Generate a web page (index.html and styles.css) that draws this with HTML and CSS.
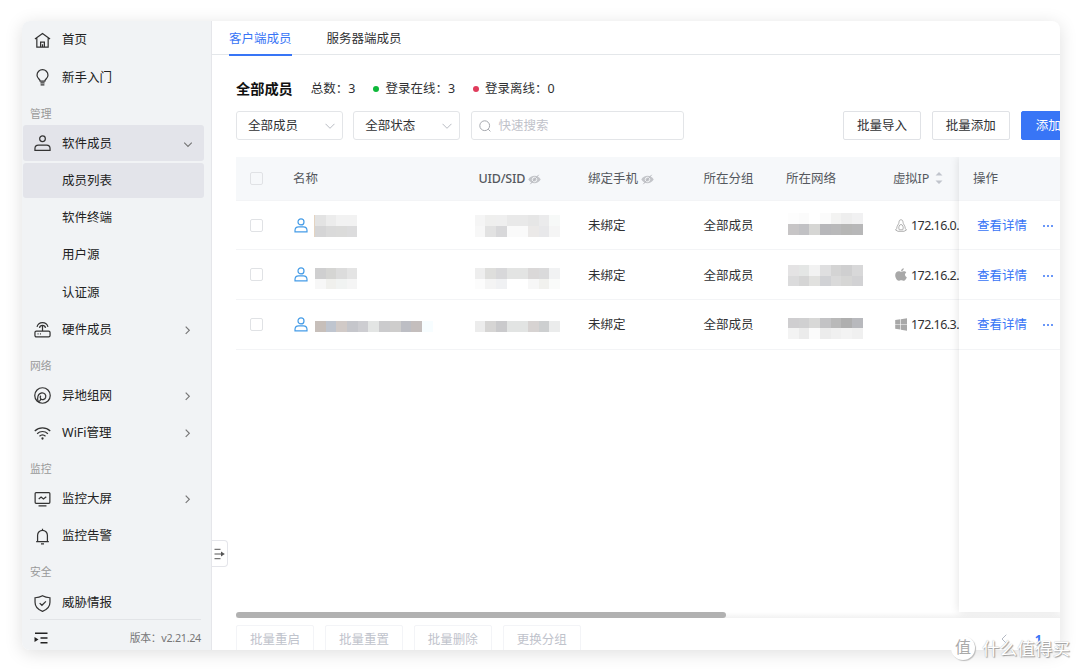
FILE: index.html
```html
<!DOCTYPE html>
<html lang="zh-CN">

<head>
    <meta charset="UTF-8" />
    <meta name="viewport" content="width=device-width, initial-scale=1.0" />
    <title>全部成员</title>
    <link rel="stylesheet" href="styles.css">
</head>

<body>
    <div class="window">
        <!-- 左侧菜单 -->
        <aside class="sidebar">
            <ul class="menu">
                <li class="item">
                    <svg class="icon" viewBox="0 0 18 18"><path d="M1 7.500 9 1.500l8 6M3 6.500v9.500h12V6.500M7 15.700v-5h4v5M9 13v2.500" /></svg>
                    <span>首页</span>
                </li>
                <li class="item">
                    <svg class="icon" viewBox="0 0 18 18"><path d="M6.500 12.800c0-1.800-3.300-3-3.300-6.300a5.800 5.800 0 0 1 11.600 0c0 3.300-3.300 4.500-3.300 6.300zM6.800 14.800h4.400M7 16.700h4" /></svg>
                    <span>新手入门</span>
                </li>
                <li class="group">管理</li>
                <li class="item active">
                    <svg class="icon" viewBox="0 0 18 18"><circle cx="9" cy="4" r="3" /><path d="M1 16.300v-1.800a3.700 3.700 0 0 1 3.700-3.700h8.600a3.700 3.700 0 0 1 3.700 3.700v1.800z" /></svg>
                    <span>软件成员</span>
                    <svg class="arrow" viewBox="0 0 10 10"><path d="m1.200 3.700 3.800 3.800 3.800-3.800" /></svg>
                </li>
                <li class="item sub active">成员列表</li>
                <li class="item sub">软件终端</li>
                <li class="item sub">用户源</li>
                <li class="item sub">认证源</li>
                <li class="item">
                    <svg class="icon" viewBox="0 0 18 18"><rect x="1" y="10.700" width="16" height="6.100" rx="1.500" /><path d="M9 10.500V5.300M3.200 6.200a6 6 0 0 1 11.600 0M5.800 7.200a3.300 3.300 0 0 1 6.400 0M3.800 13.700h1M6.300 13.700h1" /></svg>
                    <span>硬件成员</span>
                    <svg class="arrow" viewBox="0 0 10 10"><path d="m2.700 1.700 3.600 3.600-3.600 3.600" /></svg>
                </li>
                <li class="group">网络</li>
                <li class="item">
                    <svg class="icon" viewBox="0 0 18 18"><circle cx="9" cy="9" r="8.200" /><path d="M4.500 15.800C3 11.500 4 6.800 8.200 6.200c3-.3 4.900 2.400 4.100 4.900-.7 2-3 2.800-4.600 1.800-1.300-.9-1.500-2.800-.4-3.700M4.500 15.800c1.200-.3 2.300-1.300 2.700-2.900" /></svg>
                    <span>异地组网</span>
                    <svg class="arrow" viewBox="0 0 10 10"><path d="m2.700 1.700 3.600 3.600-3.600 3.600" /></svg>
                </li>
                <li class="item">
                    <svg class="icon" viewBox="0 0 18 18"><path d="M.8 6.400c4.700-4.400 11.700-4.400 16.400 0M3.300 9.200c3.300-3.100 8.100-3.100 11.400 0M5.800 11.900c2-1.800 4.400-1.800 6.400 0" /><circle class="solid" cx="9" cy="14.300" r="1.200" /></svg>
                    <span>WiFi管理</span>
                    <svg class="arrow" viewBox="0 0 10 10"><path d="m2.700 1.700 3.600 3.600-3.600 3.600" /></svg>
                </li>
                <li class="group">监控</li>
                <li class="item">
                    <svg class="icon" viewBox="0 0 18 18"><rect x="1.200" y="1.700" width="15.600" height="11.300" rx="1" /><path d="m5 8.500 2.500-2 2.500 2 3-2.500M4.800 15.800h8.400" /></svg>
                    <span>监控大屏</span>
                    <svg class="arrow" viewBox="0 0 10 10"><path d="m2.700 1.700 3.600 3.600-3.600 3.600" /></svg>
                </li>
                <li class="item">
                    <svg class="icon" viewBox="0 0 18 18"><path d="M2.300 14.500h13.400M3.800 14.300V7.700a5.200 5.200 0 0 1 10.400 0v6.600M9 .8v1.700M7.400 16.800h3.200" /></svg>
                    <span>监控告警</span>
                </li>
                <li class="group">安全</li>
                <li class="item">
                    <svg class="icon" viewBox="0 0 18 18"><path d="M9 .8c2.400 1.400 5 2 7.900 2.100v4.900c0 4.600-2.700 7.700-7.900 9.500-5.200-1.800-7.900-4.900-7.900-9.500V2.900C4 2.800 6.600 2.200 9 .8zM6 8.600l2.400 2.300 4.200-4.200" /></svg>
                    <span>威胁情报</span>
                </li>
            </ul>
            <div class="sidebar-footer">
                <svg class="fold" viewBox="0 0 14 12"><path d="M1 1.200h12.500M6.500 6h7M6.500 10.800h7" /><path class="solid" d="M.5 5v5l4-2.500z" /></svg>
                <span>版本：v2.21.24</span>
            </div>
        </aside>

        <!-- 右侧内容 -->
        <main class="main">
            <nav class="tabs">
                <a class="tab active">客户端成员</a>
                <a class="tab">服务器端成员</a>
            </nav>
            <section class="content">
                <div class="summary">
                    <h1>全部成员</h1>
                    <span class="total">总数：3</span>
                    <span class="state online">登录在线：3</span>
                    <span class="state offline">登录离线：0</span>
                </div>
                <div class="toolbar">
                    <div class="select">全部成员<svg viewBox="0 0 10 10"><path d="m.5 2.800 4.500 4.500 4.500-4.500" /></svg></div>
                    <div class="select">全部状态<svg viewBox="0 0 10 10"><path d="m.5 2.800 4.500 4.500 4.500-4.500" /></svg></div>
                    <div class="search"><svg viewBox="0 0 12 12"><circle cx="5.700" cy="5.700" r="4.900" /><path d="m9.200 9.200 2.200 2.200" /></svg>快速搜索</div>
                    <div class="actions">
                        <button class="btn">批量导入</button>
                        <button class="btn">批量添加</button>
                        <button class="btn primary">添加</button>
                    </div>
                </div>

                <div class="table">
                    <div class="table-body">
                        <div class="row head">
                            <i class="checkbox"></i>
                            <span>名称</span>
                            <span class="uid">UID/SID <svg class="eye" viewBox="0 0 14 11"><path class="solid" d="M.3 5.500C3.300.2 10.700.2 13.700 5.500c-3 5.300-10.400 5.300-13.400 0z" /><circle cx="7" cy="5.500" r="2.400" /><path d="m2.500 10.500 9-10" /></svg></span>
                            <span class="phone">绑定手机 <svg class="eye" viewBox="0 0 14 11"><path class="solid" d="M.3 5.500C3.300.2 10.700.2 13.700 5.500c-3 5.300-10.400 5.300-13.400 0z" /><circle cx="7" cy="5.500" r="2.400" /><path d="m2.500 10.500 9-10" /></svg></span>
                            <span>所在分组</span>
                            <span>所在网络</span>
                            <span class="sortable">虚拟IP <svg class="sort" viewBox="0 0 8 14"><path d="M.5 4.500 4 1l3.500 3.500zM.5 9.500 4 13l3.500-3.500z" /></svg></span>
                        </div>
                        <div class="row">
                            <i class="checkbox"></i>
                            <div class="name"><svg class="user" viewBox="0 0 14 15"><circle cx="7" cy="3.900" r="3" /><path d="M1 13.800v-1.200c0-2.300 1.700-3.700 3.700-3.700h4.600c2 0 3.700 1.400 3.700 3.700v1.200z" /></svg>
                                <div class="mosaic cols-4 tinted" data-colors="e3e3e3 ececec f2f2f2 f2f2f2 d5d5d6 dadada dbdbda dcdcdd"></div></div>
                            <div class="mosaic cols-8" data-colors="f5f5f5 efefee efefef e9e9e9 e9e9e9 e6e6e6 ebebec f7f9f8 f7f7f7 e2e2e2 d8d8da fafafa fafafa ebe9e8 e8e8ea f5f5f5"></div>
                            <span>未绑定</span>
                            <span>全部成员</span>
                            <div class="mosaic cols-7 net up" data-colors="fdfdfd fbfbfb ffffff fbfbfb f3f3f2 eeeeee f1f1f2 c7c5c6 c1c1c4 d6d6d4 b7b7ba b9b9ba b6b6b5 b7b7b8"></div>
                            <span class="ip"><svg class="os line" viewBox="0 0 12 13"><path d="M4 3.200C4 1.500 4.700.8 6 .8s2 .8 2 2.400c0 2 2.300 3.500 2.300 6.300L11.500 11 9 12.300H3L.5 11l1.200-1.500C1.700 6.700 4 5.200 4 3.200zM4.200 10.800C3 8 4.500 5.500 6 5.500s3 2.500 1.800 5.300z" /></svg>172.16.0.</span>
                        </div>
                        <div class="row">
                            <i class="checkbox"></i>
                            <div class="name"><svg class="user" viewBox="0 0 14 15"><circle cx="7" cy="3.900" r="3" /><path d="M1 13.800v-1.200c0-2.300 1.700-3.700 3.700-3.700h4.600c2 0 3.700 1.400 3.700 3.700v1.200z" /></svg>
                                <div class="mosaic cols-4 down" data-colors="cfcfd0 d5d5d3 dcdcdc e4e4e4 f7f7f7 f0f0ed f1f3f2 f5f5f5"></div></div>
                            <div class="mosaic cols-8 down" data-colors="eeeeee dededc d8d8da e3e4e3 e3e4e3 dad8d8 dadadb f1f2f3 fcfcfc f4f4f4 f0f1f3 ffffff ffffff f7f7f7 f1f1ee fafbfa"></div>
                            <span>未绑定</span>
                            <span>全部成员</span>
                            <div class="mosaic cols-7 net" data-colors="e4e3e4 e4e6e5 f2f2f2 dfdfe0 d4d4d4 cfcfd0 d8d8d9 dbdbdc d5d5d5 e1e1df d1d2d5 dadada d6d6d5 d2d2d4"></div>
                            <span class="ip"><svg class="os" viewBox="0 0 12 13"><path d="M8.800.3c.1 1.500-1.200 2.900-2.700 2.900C6 1.700 7.300.5 8.800.3zM11.300 4.600c-2 1.300-1.600 3.700.5 4.600-.5 1.500-1.700 3.500-3 3.500-.9 0-1.400-.5-2.600-.5s-1.600.5-2.500.5C2.100 12.700.2 9.700.2 7.200c0-2.700 1.800-4 3.500-4 1 0 1.900.6 2.600.6.600 0 1.600-.7 2.900-.6.900 0 1.600.5 2.100 1.400z" /></svg>172.16.2.</span>
                        </div>
                        <div class="row">
                            <i class="checkbox"></i>
                            <div class="name"><svg class="user" viewBox="0 0 14 15"><circle cx="7" cy="3.900" r="3" /><path d="M1 13.800v-1.200c0-2.300 1.700-3.700 3.700-3.700h4.600c2 0 3.700 1.400 3.700 3.700v1.200z" /></svg>
                                <div class="mosaic cols-11 low" data-colors="c7bfba bfc5cf d1cac7 c5c6cb cdcdd1 e3e5e4 cbcbcd cecdcc bdbec4 c4bebd f7fdff"></div></div>
                            <div class="mosaic cols-8 low" data-colors="ececec d6d5d4 cacacc e2e4e3 e2e4e3 d7d3d2 cdcfd0 ebecec"></div>
                            <span>未绑定</span>
                            <span>全部成员</span>
                            <div class="mosaic cols-7 net down" data-colors="cfced0 d0d0d1 d8d8d7 c3c3c5 b9b9b9 afafaf b8b9bd f3f3f3 ebebeb fbfbfb ececec f0f0f0 f3f3f3 f0f0f0"></div>
                            <span class="ip"><svg class="os" viewBox="0 0 12 13"><path d="M.2 2 5.300 1.300v4.900H.2zM5.900 1.200 12 .3v5.900H5.900zM.2 6.800h5.100v4.700l-5.100-.7zM5.900 6.800H12v5.900l-6.100-.9z" /></svg>172.16.3.</span>
                        </div>
                    </div>
                    <!-- 固定列 -->
                    <div class="table-fixed">
                        <div class="cell head">操作</div>
                        <div class="cell"><a>查看详情</a><i class="more"></i></div>
                        <div class="cell"><a>查看详情</a><i class="more"></i></div>
                        <div class="cell"><a>查看详情</a><i class="more"></i></div>
                    </div>
                </div>
                <div class="scrollbar"><div class="thumb"></div></div>
                <div class="bottom">
                    <button class="btn disabled">批量重启</button>
                    <button class="btn disabled">批量重置</button>
                    <button class="btn disabled">批量删除</button>
                    <button class="btn disabled">更换分组</button>
                    <div class="pager">
                        <svg viewBox="0 0 6 10"><path d="M5.300.7 1 5l4.300 4.300" /></svg>
                        <b>1</b>
                    </div>
                </div>
            </section>
            <div class="drawer">
                <svg viewBox="0 0 11 12"><path d="M.5 1.300h6M.5 6h7M.5 10.700h6" /><path class="solid" d="M7 3.500v5L10.800 6z" /></svg>
            </div>
        </main>
    </div>
    <div class="watermark"><span class="logo">值</span>什么值得买</div>

    <script>
        // 打码色块
        document.querySelectorAll('.mosaic').forEach(function (box) {
            box.dataset.colors.split(' ').forEach(function (color) {
                const cell = document.createElement('i')
                cell.style.backgroundColor = '#' + color
                box.appendChild(cell)
            })
        })
    </script>
</body>

</html>
```
FILE: styles.css
```css
* {
    box-sizing: border-box;
}

body {
    margin: 0;
    height: 670px;
    padding: 21px 20px 20px 22px;
    overflow: hidden;
    position: relative;
    background: #fff;
    color: #303133;
    font-family: "Noto Sans", "Noto Sans CJK SC", sans-serif;
    font-size: 12.5px;
    line-height: 18px;
}

svg {
    display: block;
    flex: none;
    fill: none;
    stroke: currentColor;
}

svg .solid {
    fill: currentColor;
    stroke: none;
}

.window {
    width: 1038px;
    height: 629px;
    display: flex;
    overflow: hidden;
    border-radius: 8px;
    background: #fff;
    box-shadow: 0 3px 18px rgba(0, 0, 0, 0.13);
}

/* 菜单 */
.sidebar {
    width: 190px;
    flex: none;
    display: flex;
    flex-direction: column;
    background: #f1f3f5;
    border-right: 1px solid #e5e6ea;
}

.menu {
    flex: 1;
    margin: 0;
    padding: 1px 7px 0 1px;
    list-style: none;
    overflow: hidden;
}

.item {
    height: 35.6px;
    margin-bottom: 1.7px;
    padding: 1px 11px 0 11px;
    display: flex;
    align-items: center;
    border-radius: 3px;
    color: #222;
}

.item:last-child {
    margin-top: 1px;
}

.item.active {
    background: #e3e4ea;
}

.item.sub {
    padding-left: 39px;
}

.icon {
    width: 17px;
    height: 17px;
    margin-right: 11px;
    color: #333;
    stroke-width: 1.3;
}

.arrow {
    width: 10px;
    height: 10px;
    margin-left: auto;
    color: #777;
    stroke-width: 1.2;
}

.group {
    height: 28.7px;
    padding: 8px 0 0 7px;
    color: #999;
    font-size: 10.8px;
}

.sidebar-footer {
    height: 31px;
    margin: 0 10px 0 8px;
    padding: 5px 0 0 4px;
    display: flex;
    align-items: center;
    justify-content: space-between;
    border-top: 1px solid #e2e4e7;
    color: #777;
    font-size: 10.8px;
}

.sidebar-footer span {
    letter-spacing: -0.3px;
}

.fold {
    width: 14px;
    height: 12px;
    color: #222;
    stroke-width: 1.4;
}

/* 内容 */
.main {
    flex: 1;
    min-width: 0;
    display: flex;
    flex-direction: column;
    position: relative;
}

.tabs {
    height: 34px;
    flex: none;
    padding-left: 17px;
    display: flex;
    gap: 35px;
    border-bottom: 1px solid #e4e7ea;
}

.tab {
    height: 35px;
    line-height: 36px;
}

.tab.active {
    color: #3875f6;
    border-bottom: 2px solid #3875f6;
}

.content {
    flex: 1;
    min-height: 0;
    padding: 24px 0 0 24px;
    display: flex;
    flex-direction: column;
    overflow: hidden;
}

.summary {
    height: 20px;
    flex: none;
    display: flex;
    align-items: center;
}

.summary h1 {
    margin: 0 18px 0 0;
    font-size: 14.2px;
    line-height: 16px;
    color: #111;
}

.total {
    margin-right: 18px;
}

.state {
    display: flex;
    align-items: center;
    margin-right: 18px;
}

.state::before {
    content: "";
    width: 6px;
    height: 6px;
    margin-right: 6px;
    border-radius: 50%;
    background: #0eb83a;
}

.state.offline::before {
    background: #e03c5c;
}

.toolbar {
    height: 29px;
    flex: none;
    margin-top: 12px;
    display: flex;
    gap: 10.5px;
}

.select,
.search {
    flex: none;
    display: flex;
    align-items: center;
    border: 1px solid #e3e5e8;
    border-radius: 3px;
}

.select {
    width: 106.8px;
    padding: 0 7px 0 11px;
    justify-content: space-between;
}

.select svg {
    width: 10px;
    height: 10px;
    color: #b8bbc2;
}

.search {
    width: 213px;
    padding-left: 7px;
    color: #bfc2ca;
}

.search svg {
    width: 12px;
    height: 12px;
    margin-right: 8px;
    color: #a5a8ae;
}

.actions {
    flex: none;
    margin-left: 149px;
    display: flex;
    gap: 11px;
}

.btn {
    width: 77.8px;
    height: 29px;
    flex: none;
    padding: 0;
    border: 1px solid #e0e2e6;
    border-radius: 2px;
    background: #fff;
    color: #303133;
    font: inherit;
}

.btn.primary {
    width: 58px;
    padding-left: 14px;
    border-color: #3875f6;
    background: #3875f6;
    color: #fff;
    text-align: left;
}

.btn.disabled {
    border-color: #f3f4f7;
    color: #bfc3cc;
}

/* 表格 */
.table {
    height: 455px;
    flex: none;
    margin-top: 17px;
    display: flex;
}

.table-body {
    width: 723px;
    flex: none;
    overflow: hidden;
}

.row {
    width: 770px;
    height: 49.7px;
    display: grid;
    grid-template-columns: 57px 181.5px 113.5px 115.5px 82.5px 107px 113px;
    align-items: center;
    border-bottom: 1px solid #f3f4f6;
}

.head {
    color: #55585e;
}

.row.head,
.cell.head {
    height: 43.7px;
    background: #f6f8fa;
}

.row > span {
    padding-top: 2px;
    white-space: nowrap;
}

.checkbox {
    width: 13px;
    height: 13px;
    margin-left: 14px;
    border: 1px solid #e0e2e5;
    border-radius: 2px;
}

.uid,
.phone,
.sortable {
    display: flex;
    align-items: center;
    gap: 3px;
}

.row > .uid {
    padding-left: 4px;
    font-weight: 500;
    letter-spacing: -0.2px;
}

.eye {
    width: 13px;
    height: 11px;
    color: #c3c5c9;
}

.eye circle {
    stroke: #f6f8fa;
}

.eye path:last-child {
    stroke: #b5b7bc;
}

.sort {
    width: 8px;
    height: 14px;
    margin: -2px 0 0 3px;
    fill: #c0c4cc;
    stroke: none;
}

.sortable {
    letter-spacing: -0.2px;
}

.name {
    display: flex;
    align-items: center;
    padding-left: 1px;
}

.user {
    width: 14px;
    height: 15px;
    margin-right: 7px;
    color: #459ce7;
    stroke-width: 1.2;
}

.mosaic {
    display: grid;
    justify-content: start;
    grid-auto-rows: 10.6px;
    position: relative;
    top: 1px;
}

.mosaic.tinted {
    box-shadow: -1px 0 #e4d3c0;
}

.cols-4 {
    grid-template-columns: repeat(4, 10.6px);
}

.cols-7 {
    grid-template-columns: repeat(7, 10.7px);
}

.cols-8 {
    grid-template-columns: repeat(8, 10.7px);
}

.cols-11 {
    grid-template-columns: repeat(11, 10.7px);
}

.net {
    margin-left: 2px;
}

.mosaic.up {
    top: -1px;
}

.mosaic.down {
    top: 4px;
}

.mosaic.low {
    top: 2px;
}

.row > .ip {
    display: flex;
    align-items: center;
    padding-left: 2px;
    letter-spacing: -0.55px;
}

.os {
    width: 12px;
    height: 13px;
    margin: -2px 4px 0 0;
    fill: #a8a8a8;
    stroke: none;
}

.os.line {
    fill: none;
    stroke: #a8a8a8;
    stroke-width: 0.9;
}

.table-fixed {
    flex: 1;
    background: #fff;
    box-shadow: 0 0 9px rgba(0, 0, 0, 0.12);
    clip-path: inset(0 0 -10px -12px);
}

.cell {
    height: 49.7px;
    padding: 2px 0 0 18px;
    display: flex;
    align-items: center;
    border-bottom: 1px solid #f3f4f6;
    color: #3875f6;
}

.cell.head {
    padding-left: 14px;
    color: #55585e;
}

/* 更多操作的三个点 */
.more {
    width: 2px;
    height: 2px;
    margin-left: 20px;
    border-radius: 50%;
    background: #3875f6;
    box-shadow: -4px 0 #3875f6, 4px 0 #3875f6;
}

.scrollbar {
    height: 6px;
    flex: none;
    background: linear-gradient(rgba(0, 0, 0, 0), rgba(0, 0, 0, 0.05));
}

.thumb {
    width: 489.5px;
    height: 6px;
    border-radius: 3px;
    background: #b1b1b1;
}

.bottom {
    flex: 1;
    padding-top: 7px;
    display: flex;
    gap: 11.2px;
    background: #fff;
    z-index: 1;
}

.pager {
    margin-left: auto;
    padding: 9px 18px 0 0;
    display: flex;
    gap: 28px;
    color: #3875f6;
    line-height: 11px;
}

.pager svg {
    width: 6px;
    height: 10px;
    color: #b5bac4;
}

/* 覆盖在内容左边缘上的展开按钮 */
.drawer {
    position: absolute;
    left: 0;
    top: 519px;
    width: 16px;
    height: 27px;
    display: flex;
    align-items: center;
    padding-left: 2px;
    border: 1px solid #e4e5ea;
    border-left: none;
    border-radius: 0 4px 4px 0;
    background: #fff;
    color: #555;
}

.drawer svg {
    width: 11px;
    height: 12px;
}

.watermark {
    position: absolute;
    right: 10px;
    bottom: 9px;
    z-index: 10;
    display: flex;
    align-items: center;
    gap: 7px;
    color: #fff;
    font-size: 17.6px;
    line-height: 26px;
    text-shadow: 1px 1px 1px #999, 0 0 1px #aaa;
}

.logo {
    width: 24px;
    height: 24px;
    border-radius: 50%;
    background: #fff;
    box-shadow: 1px 1px 1px #bbb;
    color: #aaa;
    font-size: 16px;
    line-height: 23px;
    text-align: center;
    text-shadow: none;
}
```
